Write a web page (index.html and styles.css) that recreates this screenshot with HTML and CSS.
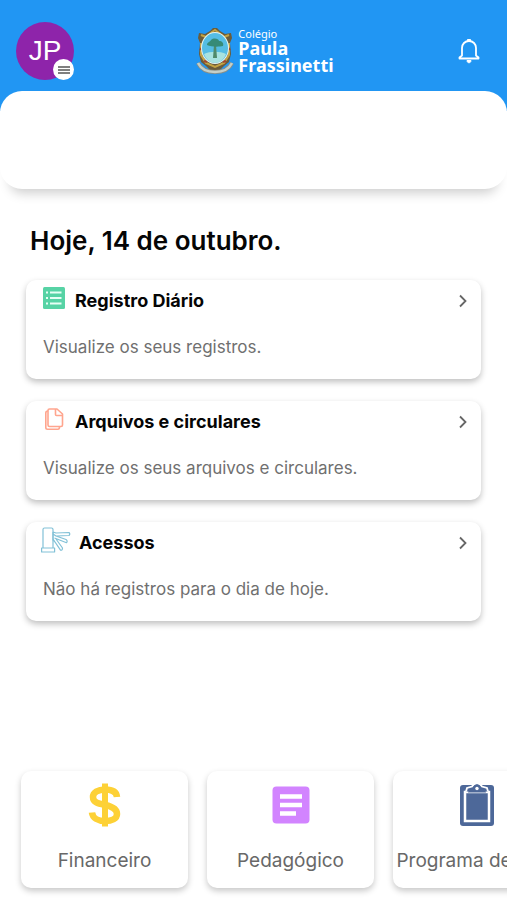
FILE: index.html
```html
<!DOCTYPE html>
<html lang="pt-BR">
<head>
  <meta charset="UTF-8">
  <meta name="viewport" content="width=device-width, initial-scale=1.0">
  <title>Colégio Paula Frassinetti</title>
  <link rel="stylesheet" href="styles.css">
</head>
<body>
  <header class="header">
    <button class="avatar" type="button" aria-label="Abrir menu">
      JP
      <span class="avatar-menu">
        <svg width="12" height="8" viewBox="0 0 12 8" stroke="#555" stroke-width="1.4"><path d="M0 1h12M0 4h12M0 7h12"/></svg>
      </span>
    </button>
    <a class="logo" href="#">
      <svg class="crest" width="38" height="46" viewBox="0 0 38 46" fill="none">
        <path d="M3 5l6 1 5-3 3-3h4l3 3 5 3 6-1 1 5-2 5 1 11-2 8-5 4-4 4h-10l-4-4-5-4-2-8 1-11-2-5z" fill="#6b5c3a"/>
        <path d="M5 7l5 2 6-5 3-2 4 3 5 4 5-2M5 15v12l5 8 9 4 9-4 5-8V15" stroke="#c3a343" stroke-width="2"/>
        <path d="M4 22l3-4M34 22l-3-4M8 33l3 1M30 33l-3 1" stroke="#a14432" stroke-width="2"/>
        <path d="M2 35c3 6 8 9 17 9s14-3 17-9" stroke="#8a8f86" stroke-width="4"/>
        <path d="M2 35c3 6 8 9 17 9s14-3 17-9" stroke="#c3cfc9" stroke-width="2.5"/>
        <ellipse cx="19" cy="20" rx="14" ry="16" fill="#e8f5f3"/>
        <ellipse cx="19" cy="20" rx="13" ry="15" fill="#55bde4"/>
        <path d="M8 26c6-3 16-3 22 0-2 6-7 9-11 9s-9-3-11-9z" fill="#a8e3e0"/>
        <path d="M18 17h2l1 13h-4z" fill="#4f8a6a"/>
        <path d="M11 17c0-3 3-3 4-5 3-3 8-1 8 1 3 0 5 2 4 5-4 1-12 1-16-1z" fill="#368b78"/>
      </svg>
      <span class="logo-text">
        <span class="logo-small">Colégio</span>
        <strong>Paula<br>Frassinetti</strong>
      </span>
    </a>
    <button class="bell" type="button" aria-label="Notificações">
      <svg width="22" height="26" viewBox="0 0 22 26" fill="none" stroke="#fff" stroke-width="1.8">
        <path d="M1.5 20.5v-1l2.5-2V10c0-4 3-7 7-7s7 3 7 7v7.500l2.500 2v1z" stroke-linejoin="round"/>
        <path d="M9.500 3V1.500h3V3M9 22.500c0 3 4 3 4 0z" fill="#fff" stroke-width="1"/>
      </svg>
    </button>
  </header>

  <section class="panel"></section>

  <main class="content">
    <h1>Hoje, 14 de outubro.</h1>

    <a class="card" href="#">
      <span class="card-head">
        <svg width="22" height="22" viewBox="0 0 22 22">
          <rect width="22" height="22" rx="1.500" fill="#57d3a5"/>
          <path d="M3 5.500h2M3 11h2M3 16.500h2M7 5.500h11.500M7 11h11.500M7 16.500h11.500" stroke="#e8fff5" stroke-width="1.800"/>
        </svg>
        <h2>Registro Diário</h2>
        <svg class="arrow" width="8" height="14" viewBox="0 0 8 14"><path d="M1 1.500L6.500 7 1 12.500"/></svg>
      </span>
      <p>Visualize os seus registros.</p>
    </a>

    <a class="card" href="#">
      <span class="card-head">
        <svg width="22" height="22" viewBox="0 0 22 22" fill="none" stroke="#ffa58e" stroke-width="1.600" stroke-linejoin="round">
          <path d="M6.500 1H14l5.500 5v11q0 1.500-1.500 1.500H6.500Q5 18.500 5 17V2.500Q5 1 6.500 1z"/>
          <path d="M12.500 1v5.500q0 1 1 1h6M5 3Q2.800 3 2.800 5v14.500q0 1.700 1.700 1.700H15q1.500 0 1.500-2.500"/>
        </svg>
        <h2>Arquivos e circulares</h2>
        <svg class="arrow" width="8" height="14" viewBox="0 0 8 14"><path d="M1 1.500L6.500 7 1 12.500"/></svg>
      </span>
      <p>Visualize os seus arquivos e circulares.</p>
    </a>

    <a class="card" href="#">
      <span class="card-head">
        <svg class="wide-icon" width="30" height="26" viewBox="0 0 30 26" fill="none" stroke="#82c1d7" stroke-width="1.200" stroke-linejoin="round">
          <path d="M2 21V2.500Q2 1 3.500 1h7Q12 1 12 2.500V21M.6 21h13v4H.6z"/>
          <path d="M12 5l3 1 13-.5q1.500 1.500 0 3L15 9l-3-2M15 9l10 3.500q2 1.500.5 3.200L13.500 11M15 12l6.500 9q0 2.500-2 2.200L12 12M12 5v8l2 2"/>
        </svg>
        <h2>Acessos</h2>
        <svg class="arrow" width="8" height="14" viewBox="0 0 8 14"><path d="M1 1.500L6.500 7 1 12.500"/></svg>
      </span>
      <p>Não há registros para o dia de hoje.</p>
    </a>
  </main>

  <nav class="shortcuts">
    <a class="tile" href="#">
      <svg width="44" height="44" viewBox="0 0 44 44" fill="none" stroke="#fdd136">
        <path d="M34 14C33.500 9 29 6.500 22 6.500S10 9.500 10 14c0 5.500 5 6.500 12 8s12 3.500 12 9c0 4.500-5 7-12 7S9.500 35 9 29.500" stroke-width="6.500"/>
        <path d="M22 .5v43" stroke-width="6"/>
      </svg>
      <span>Financeiro</span>
    </a>
    <a class="tile" href="#">
      <svg width="44" height="44" viewBox="0 0 44 44">
        <rect x="3.500" y="3.500" width="37" height="37" rx="4" fill="#d284ff"/>
        <path d="M11 13.500h22M11 22h22M11 30.500h16" stroke="#fff" stroke-width="4.500"/>
      </svg>
      <span>Pedagógico</span>
    </a>
    <a class="tile" href="#">
      <svg width="44" height="44" viewBox="0 0 44 44">
        <rect x="5" y="2" width="34" height="41" rx="3" fill="#4d6899"/>
        <rect x="10" y="9" width="24" height="29" fill="none" stroke="#fff" stroke-width="2.500"/>
        <path d="M11 8.500l1-3.500 5-1.500c2-4 8-4 10 0L32 5l1 3.500" fill="#4d6899" stroke="#fff" stroke-width="1.800"/>
        <path d="M13 9.500l1-3 4-1.500c1-5 7-5 8 0l4 1.500 1 3z" fill="#4d6899"/>
        <circle cx="22" cy="5.500" r="1.700" fill="#fff"/>
      </svg>
      <span>Programa de Aula</span>
    </a>
  </nav>
</body>
</html>
```
FILE: styles.css
```css
* {
  box-sizing: border-box;
}
body {
  margin: 0;
  min-height: 100vh;
  display: flex;
  flex-direction: column;
  background: #fff;
  color: #050505;
  font-family: 'Inter', 'Roboto', sans-serif;
  overflow-x: hidden;
}
a {
  color: inherit;
  text-decoration: none;
}
button {
  border: none;
  background: none;
  padding: 0;
  font: inherit;
  color: #fff;
  cursor: pointer;
}
svg {
  display: block;
  flex: none;
}
.header {
  display: grid;
  grid-template-columns: 1fr auto 1fr;
  align-items: center;
  padding: 22px 27px 31px 16px;
  background: #2196f3;
}
.avatar {
  position: relative;
  width: 58px;
  height: 58px;
  border-radius: 50%;
  background: #8e24aa;
  font-family: 'Liberation Sans', sans-serif;
  font-size: 28px;
}
.avatar-menu {
  position: absolute;
  right: 0;
  bottom: 0;
  width: 21px;
  height: 21px;
  border-radius: 50%;
  background: #fff;
  display: flex;
  align-items: center;
  justify-content: center;
}
.logo {
  display: flex;
  align-items: center;
  gap: 4px;
  padding-left: 34px;
  color: #fff;
  font-family: 'Noto Sans', sans-serif;
}
.logo-text {
  display: flex;
  flex-direction: column;
}
.logo-small {
  font-size: 11px;
  line-height: 12px;
}
.logo strong {
  font-size: 18px;
  line-height: 17px;
}
.bell {
  justify-self: end;
}
.panel {
  height: 98px;
  margin-top: -20px;
  border-radius: 22px;
  background: #fff;
  box-shadow: 0 14px 12px -10px rgba(0,0,0,0.2);
}
.content {
  display: flex;
  flex-direction: column;
  gap: 22px;
  padding: 35px 26px 22px;
}
h1 {
  margin: 0 4px;
  font-size: 26px;
  line-height: 34px;
  font-weight: 600;
}
.card {
  padding: 4px 14px 20px 17px;
  border-radius: 10px;
  background: #fff;
  box-shadow: 0 3px 6px rgba(0,0,0,0.25);
}
.card-head {
  display: flex;
  align-items: center;
  height: 28px;
  gap: 10px;
}
.card h2 {
  flex: 1;
  margin: 6px 0 0;
  font-size: 18px;
  line-height: 22px;
  font-weight: 700;
}
.card p {
  margin: 24px 0 0;
  font-size: 17px;
  line-height: 23px;
  color: #707070;
}
.arrow {
  margin-top: 6px;
  fill: none;
  stroke: #666;
  stroke-width: 1.8;
}
.wide-icon {
  margin: 0 -2px;
}
.shortcuts {
  display: flex;
  gap: 19px;
  margin-top: auto;
  padding: 12px 21px;
  overflow-x: auto;
  scrollbar-width: none;
}
.tile {
  flex: 0 0 167px;
  display: flex;
  flex-direction: column;
  align-items: center;
  gap: 22px;
  padding: 12px 0 15px;
  border-radius: 10px;
  background: #fff;
  box-shadow: 0 3px 6px rgba(0,0,0,0.22);
  color: #686868;
  font-size: 19px;
  line-height: 24px;
  white-space: nowrap;
}
```
